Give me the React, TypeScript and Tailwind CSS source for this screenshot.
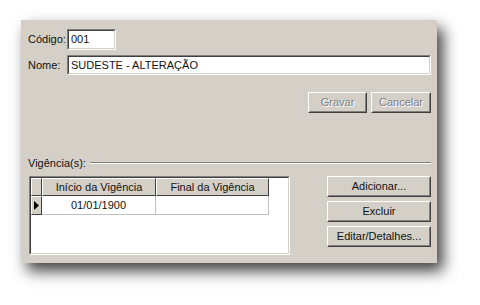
import React from "react";

const font = { fontFamily: '"Liberation Sans", Arial, sans-serif' };

function Sunken({ className, children }: { className: string; children?: React.ReactNode }) {
  return (
    <div className={`border border-t-[#808080] border-l-[#808080] border-b-white border-r-white ${className}`}>
      <div className="w-full h-full border border-t-[#404040] border-l-[#404040] border-b-[#d4d0c8] border-r-[#d4d0c8] bg-white">
        {children}
      </div>
    </div>
  );
}

function Button({ className, label, disabled }: { className: string; label: string; disabled?: boolean }) {
  return (
    <div className={`border border-t-white border-l-white border-b-[#404040] border-r-[#404040] ${className}`}>
      <div className="w-full h-full border border-t-[#d4d0c8] border-l-[#d4d0c8] border-b-[#808080] border-r-[#808080] bg-[#d4d0c8] flex items-center justify-center">
        <span
          className={
            disabled
              ? "text-[11px] text-[#808080] [text-shadow:1px_1px_0_#ffffff]"
              : "text-[11px] text-[#111111]"
          }
        >
          {label}
        </span>
      </div>
    </div>
  );
}

function HeaderCell({ className, children }: { className: string; children?: React.ReactNode }) {
  return (
    <div className={`h-[18px] border border-t-white border-l-white border-b-[#404040] border-r-[#404040] bg-[#d4d0c8] flex items-center justify-center text-[11px] text-[#111111] ${className}`}>
      {children}
    </div>
  );
}

export default function App() {
  return (
    <div className="w-[480px] h-[305px] bg-white overflow-hidden" style={font}>
      <div className="ml-[21px] mt-[20px] w-[416px] h-[243px] bg-[#d4d0c8] shadow-[6px_8px_14px_rgba(0,0,0,0.75)] flex flex-col pl-[7px] pr-[6px] pt-[9px]">
        <div className="flex items-center h-[21px]">
          <span className="w-[39px] text-[11px] text-[#111111]">Código:</span>
          <Sunken className="w-[49px] h-[21px]">
            <div className="pl-[2px] text-[11px] leading-[17px] text-[#111111]">001</div>
          </Sunken>
        </div>
        <div className="flex items-center h-[20px] mt-[5px]">
          <span className="w-[39px] text-[11px] text-[#111111]">Nome:</span>
          <Sunken className="w-[364px] h-[20px]">
            <div className="pl-[2px] text-[11px] leading-[16px] text-[#111111]">SUDESTE - ALTERAÇÃO</div>
          </Sunken>
        </div>
        <div className="flex justify-end gap-[4px] mt-[17px]">
          <Button className="w-[59px] h-[21px]" label="Gravar" disabled />
          <Button className="w-[60px] h-[21px]" label="Cancelar" disabled />
        </div>
        <div className="flex items-center h-[14px] mt-[43px]">
          <span className="text-[11px] text-[#111111]">Vigência(s):</span>
          <div className="flex-1 ml-[4px] flex flex-col">
            <div className="h-px bg-[#808080]" />
            <div className="h-px bg-white" />
          </div>
        </div>
        <div className="flex mt-[6px]">
          <Sunken className="ml-px w-[261px] h-[79px]">
            <div className="flex">
              <HeaderCell className="w-[11px]" />
              <HeaderCell className="w-[114px]">Início da Vigência</HeaderCell>
              <HeaderCell className="w-[113px]">Final da Vigência</HeaderCell>
            </div>
            <div className="flex h-[19px]">
              <div className="w-[11px] h-[19px] border border-t-white border-l-white border-b-[#404040] border-r-[#404040] bg-[#d4d0c8] flex items-center justify-center">
                <svg width="5" height="9" viewBox="0 0 5 9">
                  <path d="M0 0 L5 4.5 L0 9 Z" fill="#000" />
                </svg>
              </div>
              <div className="w-[114px] h-[19px] border-r border-b border-[#c0c0c0] flex items-center justify-center text-[11px] text-[#111111]">
                01/01/1900
              </div>
              <div className="w-[113px] h-[19px] border-r border-b border-[#c0c0c0]" />
            </div>
          </Sunken>
          <div className="ml-[37px] flex flex-col gap-[4px]">
            <Button className="w-[104px] h-[21px]" label="Adicionar..." />
            <Button className="w-[104px] h-[21px]" label="Excluir" />
            <Button className="w-[104px] h-[21px]" label="Editar/Detalhes..." />
          </div>
        </div>
      </div>
    </div>
  );
}
